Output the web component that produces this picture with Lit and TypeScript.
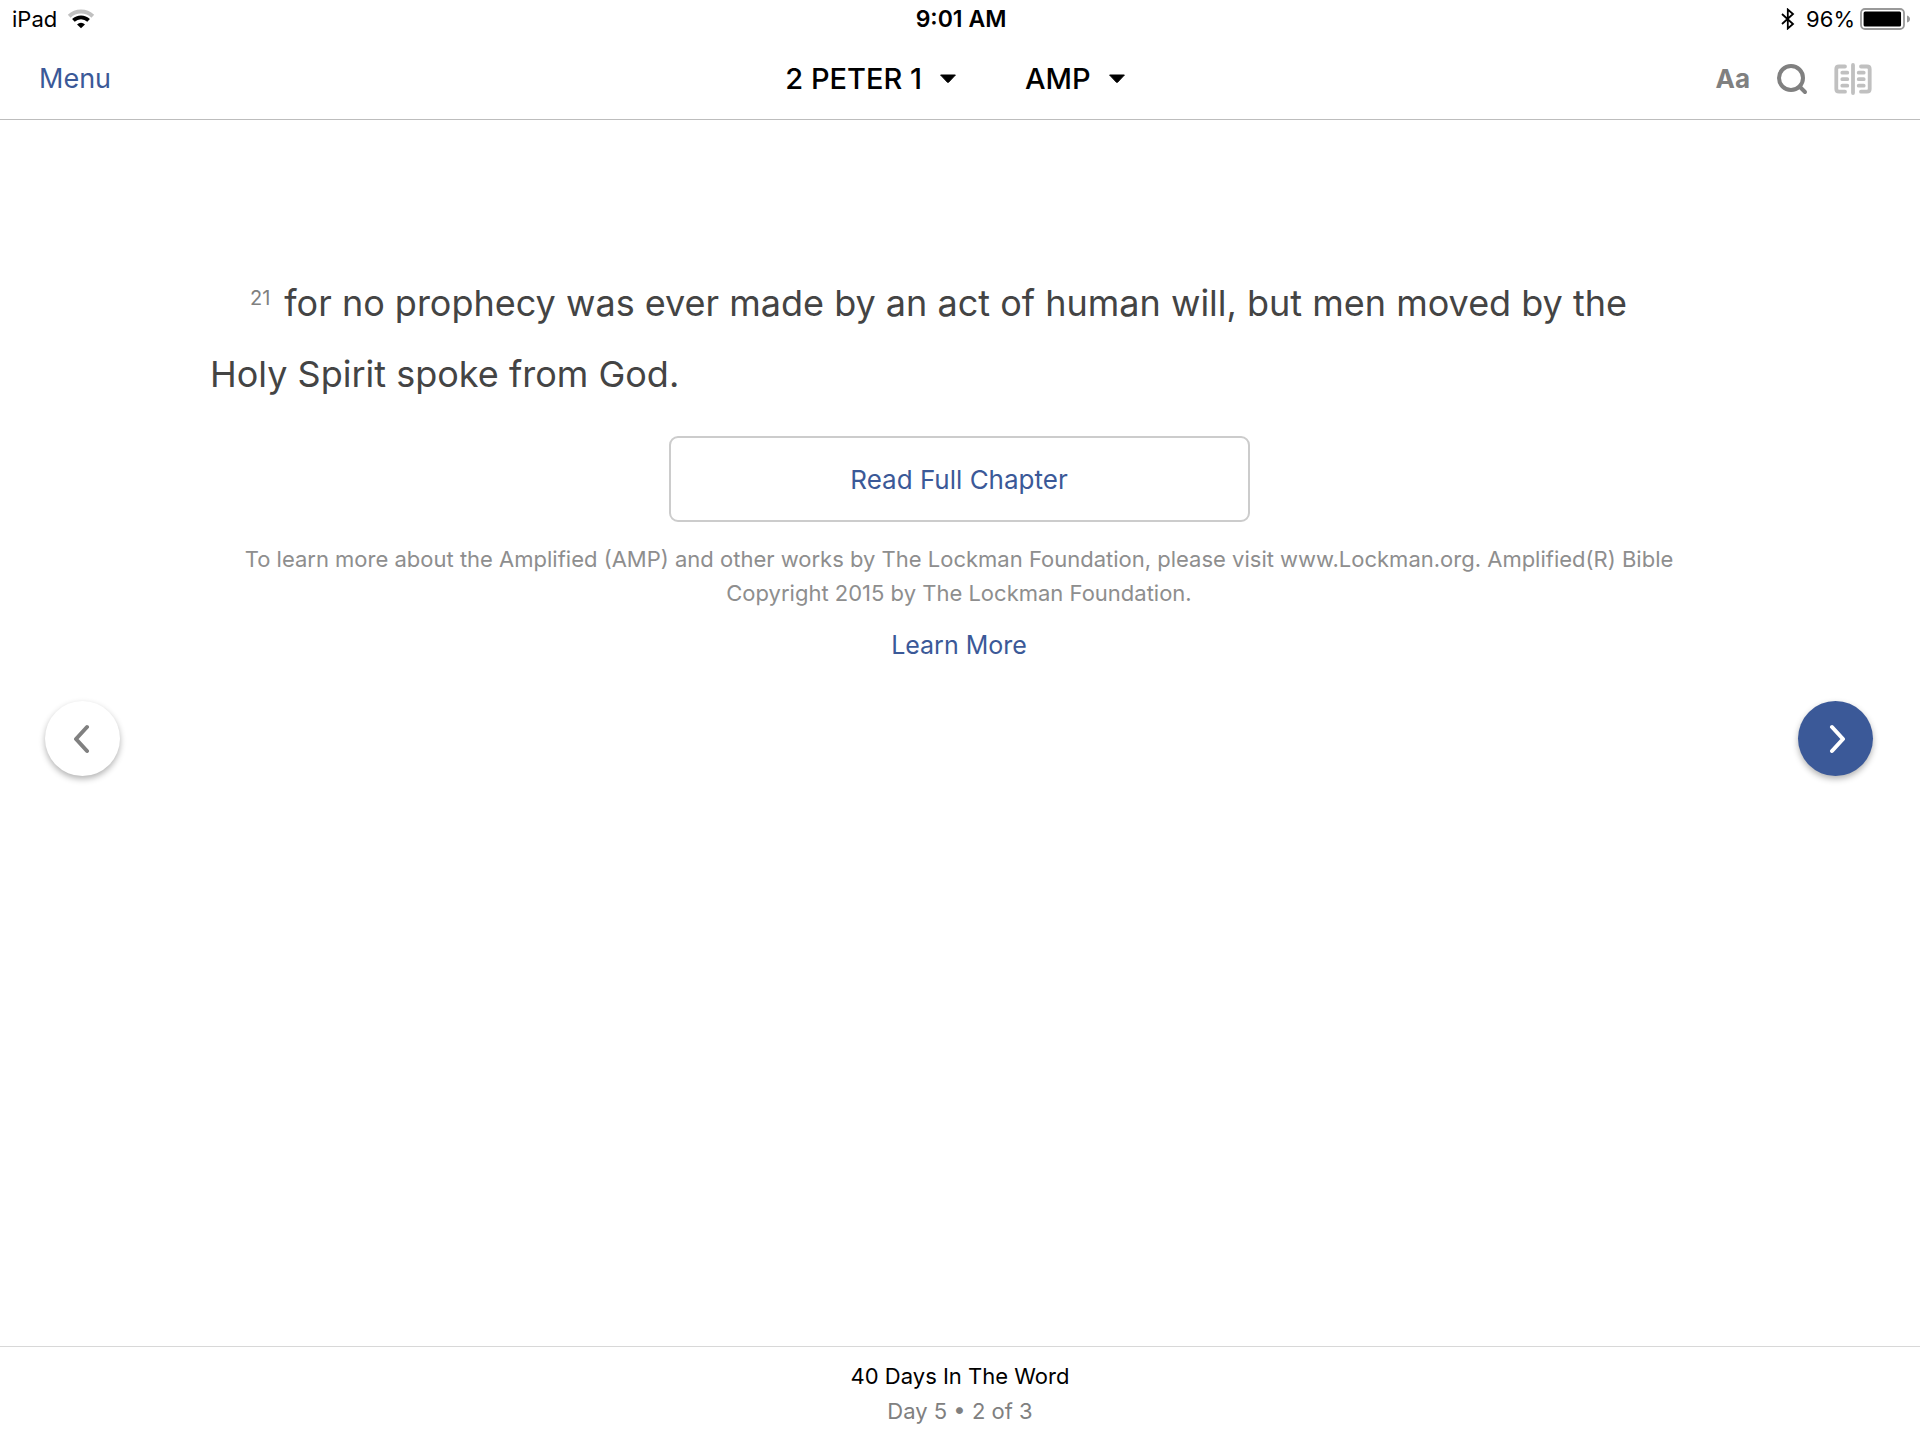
import { LitElement, html, svg, css } from "lit";
import { customElement, property } from "lit/decorators.js";

const caret = html`<svg class="caret" viewBox="0 0 18 10" width="18" height="10" aria-hidden="true">
  <path d="M1.6 1h14.8L9.6 8.2q-.6.6-1.2 0z" fill="#000" stroke="#000" stroke-width="1" stroke-linejoin="round" />
</svg>`;

/* One page edge of the open book; the right one is its mirror image. */
const bookPage = svg`<path d="M11 3.500H5Q2.300 3.500 2.300 6v20q0 2.700 2.700 2.700h6M8.300 9.700h5M8.300 16.200h5M8.300 22.700h5" />`;

@customElement("status-bar")
export class StatusBar extends LitElement {
  @property({ type: Number }) charge = 96;

  static styles = css`
    :host {
      display: grid;
      grid-template-columns: 1fr auto 1fr;
      align-items: center;
      height: 38px;
      padding: 0 10px 0 12px;
      font-size: 22px;
      color: #000;
    }
    .side {
      display: flex;
      align-items: center;
      gap: 10px;
    }
    .end {
      justify-content: flex-end;
      gap: 5px;
    }
    .bluetooth {
      margin-right: 6px;
    }
    .time {
      font-size: 23px;
      font-weight: 600;
    }
    svg {
      display: block;
    }
  `;

  render() {
    return html`
      <div class="side">
        <span>iPad</span>
        <svg width="28" height="20" viewBox="0 0 28 20" role="img" aria-label="Wi-Fi">
          <path d="M2.200 7.200a17 17 0 0 1 23.600 0" fill="none" stroke="#c0c0c0" stroke-width="4" />
          <path d="M6.400 11.400a11 11 0 0 1 15.200 0" fill="none" stroke="#000" stroke-width="3.800" />
          <path d="M14 19.200l-4-3.800a6 6 0 0 1 8 0z" fill="#000" />
        </svg>
      </div>
      <span class="time">9:01 AM</span>
      <div class="side end">
        <svg class="bluetooth" width="14" height="22" viewBox="0 0 14 22" role="img" aria-label="Bluetooth">
          <path d="M1 6l11 10-5.200 4.500V1.500L12 6 1 16" fill="none" stroke="#000" stroke-width="1.800" />
        </svg>
        <span>${this.charge}%</span>
        <svg width="50" height="22" viewBox="0 0 50 22" role="img" aria-label="Battery">
          <rect x="1" y="1" width="43" height="20" rx="4" fill="none" stroke="#999" stroke-width="1.800" />
          <rect x="3.600" y="3.600" width=${(this.charge * 39) / 100} height="14.800" rx="1.500" fill="#000" />
          <path d="M47 7.500q3 1 3 3.500t-3 3.500z" fill="#999" />
        </svg>
      </div>
    `;
  }
}

@customElement("reader-toolbar")
export class ReaderToolbar extends LitElement {
  static styles = css`
    :host {
      display: grid;
      grid-template-columns: 1fr auto 1fr;
      align-items: center;
      height: 82px;
      box-sizing: border-box;
      padding: 0 48px 0 39px;
      border-bottom: 1px solid #bdbdbd;
    }
    button {
      display: flex;
      align-items: center;
      margin: 0;
      padding: 0;
      border: 0;
      background: none;
      font: inherit;
      color: inherit;
      cursor: pointer;
    }
    svg {
      display: block;
    }
    .menu {
      font-size: 27px;
      color: #3b5998;
    }
    .pickers {
      display: flex;
      gap: 68px;
      font-size: 29px;
      font-weight: 500;
      color: #000;
    }
    .pickers button {
      gap: 17px;
    }
    .tools {
      display: flex;
      align-items: center;
      justify-content: flex-end;
      gap: 26px;
      color: #808080;
    }
    .type {
      font-size: 26px;
      font-weight: 700;
    }
  `;

  render() {
    return html`
      <div><button class="menu">Menu</button></div>
      <div class="pickers">
        <button aria-haspopup="listbox">2 PETER 1 ${caret}</button>
        <button aria-haspopup="listbox">AMP ${caret}</button>
      </div>
      <div class="tools">
        <button class="type" aria-label="Aa text settings">Aa</button>
        <button aria-label="Search">
          <svg width="32" height="32" viewBox="0 0 32 32" fill="none" stroke="#808080" stroke-width="4">
            <circle cx="15" cy="15" r="12" />
            <path d="M23.500 23.500l5.500 5.500" stroke-width="4" stroke-linecap="round" />
          </svg>
        </button>
        <button aria-label="Parallel view">
          <svg width="38" height="32" viewBox="0 0 38 32" fill="none" stroke="#c0c0c0" stroke-width="3.800" stroke-linecap="round">
            ${bookPage}
            <g transform="translate(38 0) scale(-1 1)">${bookPage}</g>
            <path d="M19 2v28" />
          </svg>
        </button>
      </div>
    `;
  }
}

@customElement("reader-passage")
export class ReaderPassage extends LitElement {
  static styles = css`
    :host {
      display: flex;
      flex-direction: column;
      align-items: center;
    }
    .verse {
      align-self: stretch;
      margin: 0;
      padding-right: 40px;
      font-size: 36px;
      line-height: 71px;
      text-indent: 40px;
      color: #444;
    }
    .number {
      margin-right: 14px;
      font-size: 20px;
      line-height: 1;
      vertical-align: 11px;
      color: #808080;
    }
    .full {
      width: 581px;
      max-width: 100%;
      height: 86px;
      margin: 26px 0 20px;
      border: 2px solid #ccc;
      border-radius: 9px;
      background: #fff;
      font: inherit;
      font-size: 26px;
      color: #3b5998;
      cursor: pointer;
    }
    .notice {
      margin: 0;
      font-size: 22px;
      line-height: 34px;
      text-align: center;
      color: #8e8e8e;
    }
    .more {
      margin-top: 18px;
      font-size: 25px;
      line-height: 34px;
      color: #3b5998;
      text-decoration: none;
    }
  `;

  render() {
    return html`
      <p class="verse"><sup class="number">21</sup>for no prophecy was ever made by an act of human will, but men moved by the Holy Spirit spoke from God.</p>
      <button class="full">Read Full Chapter</button>
      <p class="notice">
        To learn more about the Amplified (AMP) and other works by The Lockman Foundation, please visit
        www.Lockman.org. Amplified(R) Bible Copyright 2015 by The Lockman Foundation.
      </p>
      <a class="more" href="#learn-more">Learn More</a>
    `;
  }
}

@customElement("app-root")
export class AppRoot extends LitElement {
  static styles = css`
    :host {
      display: flex;
      flex-direction: column;
      min-height: 100vh;
      background: #fff;
      font-family: Inter, "Liberation Sans", sans-serif;
    }
    main {
      flex: 1;
      display: grid;
      grid-template-columns: 75px 1fr 75px;
      align-items: center;
      padding: 11px 47px 0 45px;
    }
    reader-passage {
      align-self: start;
      padding: 137px 90px 0;
    }
    .turn {
      display: grid;
      place-items: center;
      width: 75px;
      height: 75px;
      padding: 0;
      border: 0;
      border-radius: 50%;
      background: #fff;
      color: #808080;
      box-shadow: 0 3px 6px rgba(0, 0, 0, 0.3);
      cursor: pointer;
    }
    .next {
      background: #3b5998;
      color: #fff;
    }
    footer {
      display: flex;
      flex-direction: column;
      align-items: center;
      height: 94px;
      box-sizing: border-box;
      padding-top: 12px;
      border-top: 1px solid #d8d8d8;
      font-size: 22px;
      line-height: 35px;
      color: #808080;
    }
    .plan {
      color: #000;
    }
  `;

  render() {
    return html`
      <status-bar></status-bar>
      <reader-toolbar></reader-toolbar>
      <main>
        <button class="turn" aria-label="Previous">
          <svg width="18" height="30" viewBox="0 0 18 30" fill="none" stroke="currentColor" stroke-width="4" stroke-linecap="round" stroke-linejoin="round">
            <path d="M13 3L2 15l11 12" />
          </svg>
        </button>
        <reader-passage></reader-passage>
        <button class="turn next" aria-label="Next">
          <svg width="18" height="30" viewBox="0 0 18 30" fill="none" stroke="currentColor" stroke-width="4" stroke-linecap="round" stroke-linejoin="round">
            <path d="M5 3l11 12L5 27" />
          </svg>
        </button>
      </main>
      <footer>
        <span class="plan">40 Days In The Word</span>
        <span>Day 5 • 2 of 3</span>
      </footer>
    `;
  }
}
